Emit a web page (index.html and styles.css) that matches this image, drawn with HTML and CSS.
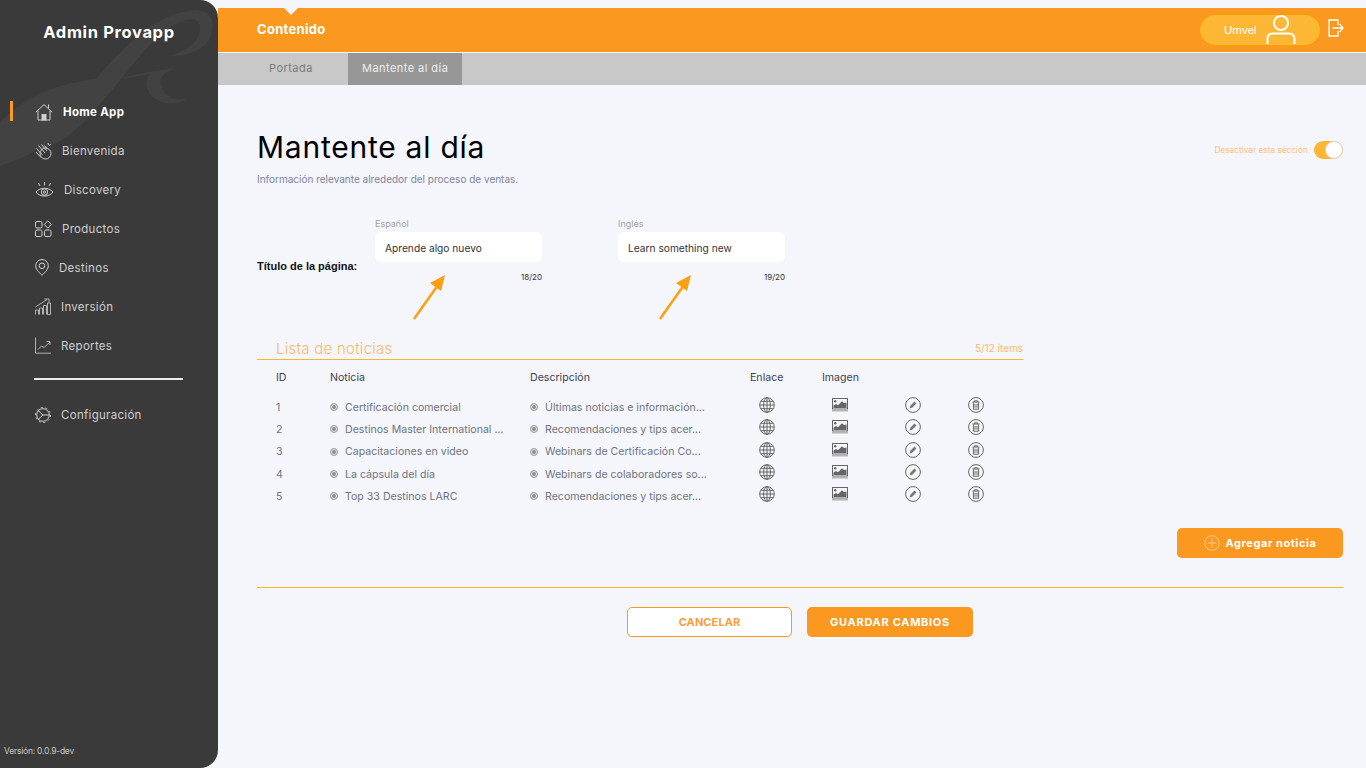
FILE: index.html
```html
<!DOCTYPE html>
<html lang="es">

<head>
    <meta charset="UTF-8">
    <meta name="viewport" content="width=device-width, initial-scale=1.0">
    <title>Admin Provapp</title>
    <link rel="stylesheet" href="styles.css">
</head>

<body>
    <!-- Shared table icons -->
    <svg class="icon-defs" width="0" height="0">
        <symbol id="i-globe" viewBox="0 0 16 16">
            <g fill="none" stroke="currentColor" stroke-width="1">
                <circle cx="8" cy="8" r="7.3"/>
                <ellipse cx="8" cy="8" rx="3.4" ry="7.3"/>
                <path d="M8 .7v14.6M.7 8h14.6M1.8 4.3h12.4M1.8 11.7h12.4"/>
            </g>
        </symbol>
        <symbol id="i-image" viewBox="0 0 16 14">
            <rect x=".5" y=".5" width="15" height="10.5" fill="none" stroke="currentColor"/>
            <circle cx="3.2" cy="3.2" r="1.2" fill="currentColor"/>
            <path d="M1.5 10V7.5l2.5-1.6 2 1.4 4-4 2 1.8 2.5-.6V10z" fill="currentColor"/>
            <rect y="11.5" width="16" height="2" fill="#b5b5b5"/>
        </symbol>
        <symbol id="i-edit" viewBox="0 0 16 16">
            <circle cx="8" cy="8" r="7.4" fill="none" stroke="currentColor"/>
            <path d="M4.6 11.4l.7-2.6 4.2-4.2 1.900 1.900-4.200 4.200z" fill="#777"/>
        </symbol>
        <symbol id="i-trash" viewBox="0 0 16 16">
            <circle cx="8" cy="8" r="7.4" fill="none" stroke="currentColor"/>
            <path d="M4.500 5h7M6.500 5V3.800h3V5M5.400 5.400v6.800h5.200V5.400M7 6.800v4M9 6.800v4" fill="none" stroke="currentColor"/>
        </symbol>
    </svg>

    <!-- Sidebar -->
    <aside class="sidebar">
        <svg class="sidebar-mark" width="218" height="170" viewBox="0 0 218 170">
            <path d="M0 122C30 92 60 82 118 76 90 108 58 148 0 166z" fill="#424242"/>
            <path d="M72 110C110 60 150 12 196 10c16 0 20 14 14 28-6 12-22 18-40 18 14-4 28-12 30-26 1-10-6-12-14-10-32 8-62 60-100 100-20 20-40 34-86 36 44-8 62-24 72-46z" fill="#424242"/>
            <path d="M118 78c20-4 40-8 58-10-14 4-18 12-14 20 4 10 16 14 26 10-10 8-28 8-38-4-6-8-4-14 0-20-10 2-20 4-32 4z" fill="#424242"/>
        </svg>
        <h1 class="brand">Admin Provapp</h1>
        <nav class="side-nav">
            <a class="side-link active">
                <svg width="18" height="18" viewBox="0 0 18 18" fill="none" stroke="#cfcfcf"><path d="M.8 9.200L9 1.600l8.200 7.600M3 7.600V17h12V7.600M13.500 5V1.500"/><rect x="7" y="11.500" width="4" height="5.500" fill="#cfcfcf"/></svg>
                <span>Home App</span>
            </a>
            <a class="side-link">
                <svg width="17" height="18" viewBox="0 0 17 18" fill="none" stroke="currentColor"><circle cx="10.500" cy="11.500" r="5.500"/><path d="M1.500 6.500l6 6.500M1 10l5 5.500M3.500 3.500l6.500 7.500M6.500 2.500l5.500 6.500M9.500 3.500l3 3.500"/><path d="M13 1l.5 2M15.500 2l-1 1.800"/></svg>
                <span>Bienvenida</span>
            </a>
            <a class="side-link">
                <svg width="19" height="18" viewBox="0 0 19 18" fill="none" stroke="currentColor"><path d="M1 11c4-5 13-5 17 0-4 5.500-13 5.500-17 0z"/><circle cx="9.500" cy="11" r="3.200"/><circle cx="9.500" cy="11" r="1.200"/><path d="M9.500 1v3.500M3.500 2l1.500 3M15.500 2L14 5"/></svg>
                <span>Discovery</span>
            </a>
            <a class="side-link">
                <svg width="17" height="17" viewBox="0 0 17 17" fill="none" stroke="currentColor"><rect x=".5" y="1.500" width="6.500" height="6.500" rx="1.500"/><rect x=".5" y="10" width="6.500" height="6.500" rx="1.500"/><rect x="9.500" y="10" width="6.500" height="6.500" rx="1.500"/><path d="M12.800.8l3.500 3.700-3.500 3.700-3.500-3.700z"/></svg>
                <span>Productos</span>
            </a>
            <a class="side-link">
                <svg width="14" height="17" viewBox="0 0 14 17" fill="none" stroke="currentColor"><path d="M7 16.300C3 12.500.7 9.800.7 6.800a6.300 6.300 0 0 1 12.600 0c0 3-2.300 5.700-6.300 9.500z"/><circle cx="7" cy="6.800" r="2.800"/></svg>
                <span>Destinos</span>
            </a>
            <a class="side-link">
                <svg width="16" height="17" viewBox="0 0 16 17" fill="none" stroke="currentColor" stroke-width=".8"><path d="M.5 16.500V12h3v4.500M4.500 16.500V10h3v6.500M8.500 16.500V7.500h3v9M12.500 16.500V5h3v11.500zM.5 9L12 1.500M9.500 1H14v3.500"/></svg>
                <span>Inversión</span>
            </a>
            <a class="side-link">
                <svg width="16" height="17" viewBox="0 0 16 17" fill="none" stroke="currentColor" stroke-width=".8"><path d="M.5.500v15.700H16"/><path d="M3 12.500l3.500-3.500 2.500 1.500L15 5M11.500 4.500H15V8"/></svg>
                <span>Reportes</span>
            </a>
        </nav>
        <hr class="side-sep">
        <a class="side-link">
            <svg width="16" height="16" viewBox="0 0 16 16" fill="none" stroke="currentColor"><circle cx="8" cy="8" r="6.300"/><circle cx="8" cy="8" r="7.500" stroke-dasharray="2 2.700"/><path d="M3 3.500L8 8l-5 4.500M8 8h6.300"/></svg>
            <span>Configuración</span>
        </a>
        <p class="version">Versión: 0.0.9-dev</p>
    </aside>

    <!-- Main content -->
    <main class="main-content">
        <header class="top-bar">
            <span class="top-notch"></span>
            <h2 class="top-title">Contenido</h2>
            <div class="user-pill">
                <span>Umvel</span>
                <svg width="30" height="30" viewBox="0 0 30 30" fill="none" stroke="#fff" stroke-width="2"><circle cx="15" cy="8" r="7"/><path d="M1.500 29v-5c0-3.500 2-5.500 5.500-5.500h16c3.500 0 5.500 2 5.500 5.500v5"/></svg>
            </div>
            <svg class="logout" width="16" height="18" viewBox="0 0 16 18" fill="none" stroke="#fff" stroke-width="1.300"><path d="M10 6V1H1v16h9v-5"/><path d="M4.500 9H15M11.500 5L15 9l-3.500 4"/></svg>
        </header>
        <div class="sub-nav">
            <a class="sub-link">Portada</a>
            <a class="sub-link current">Mantente al día</a>
        </div>

        <section class="page">
            <div class="page-head">
                <div>
                    <h1 class="page-title">Mantente al día</h1>
                    <p class="page-sub">Información relevante alrededor del proceso de ventas.</p>
                </div>
                <div class="section-toggle">
                    <span>Desactivar esta sección</span>
                    <span class="switch"></span>
                </div>
            </div>

            <div class="title-form">
                <label class="form-label">Título de la página:</label>
                <div class="field">
                    <span class="field-lang">Español</span>
                    <div class="field-input">Aprende algo nuevo</div>
                    <span class="field-count">18/20</span>
                    <svg class="arrow" width="36" height="48" viewBox="0 0 36 48"><path d="M2 46L26 12" stroke="#ff9f10" stroke-width="2.500"/><path d="M33 2l-15 8 11 8z" fill="#ff9f10"/></svg>
                </div>
                <div class="field">
                    <span class="field-lang">Inglés</span>
                    <div class="field-input">Learn something new</div>
                    <span class="field-count">19/20</span>
                    <svg class="arrow arrow-en" width="36" height="48" viewBox="0 0 36 48"><path d="M2 46L26 12" stroke="#ff9f10" stroke-width="2.500"/><path d="M33 2l-15 8 11 8z" fill="#ff9f10"/></svg>
                </div>
            </div>

            <div class="news">
                <div class="news-head">
                    <h3>Lista de noticias</h3>
                    <span>5/12 ítems</span>
                </div>
                <div class="news-row news-labels">
                    <span>ID</span><span>Noticia</span><span>Descripción</span><span>Enlace</span><span>Imagen</span>
                </div>
                <div class="news-row">
                    <span>1</span>
                    <span class="cell-dot">Certificación comercial</span>
                    <span class="cell-dot">Últimas noticias e información...</span>
                    <svg class="ic-globe"><use href="#i-globe"/></svg>
                    <svg class="ic-image"><use href="#i-image"/></svg>
                    <svg class="ic-edit"><use href="#i-edit"/></svg>
                    <svg class="ic-edit"><use href="#i-trash"/></svg>
                </div>
                <div class="news-row">
                    <span>2</span>
                    <span class="cell-dot">Destinos Master International ...</span>
                    <span class="cell-dot">Recomendaciones y tips acer...</span>
                    <svg class="ic-globe"><use href="#i-globe"/></svg>
                    <svg class="ic-image"><use href="#i-image"/></svg>
                    <svg class="ic-edit"><use href="#i-edit"/></svg>
                    <svg class="ic-edit"><use href="#i-trash"/></svg>
                </div>
                <div class="news-row">
                    <span>3</span>
                    <span class="cell-dot">Capacitaciones en video</span>
                    <span class="cell-dot">Webinars de Certificación Co...</span>
                    <svg class="ic-globe"><use href="#i-globe"/></svg>
                    <svg class="ic-image"><use href="#i-image"/></svg>
                    <svg class="ic-edit"><use href="#i-edit"/></svg>
                    <svg class="ic-edit"><use href="#i-trash"/></svg>
                </div>
                <div class="news-row">
                    <span>4</span>
                    <span class="cell-dot">La cápsula del día</span>
                    <span class="cell-dot">Webinars de colaboradores so...</span>
                    <svg class="ic-globe"><use href="#i-globe"/></svg>
                    <svg class="ic-image"><use href="#i-image"/></svg>
                    <svg class="ic-edit"><use href="#i-edit"/></svg>
                    <svg class="ic-edit"><use href="#i-trash"/></svg>
                </div>
                <div class="news-row">
                    <span>5</span>
                    <span class="cell-dot">Top 33 Destinos LARC</span>
                    <span class="cell-dot">Recomendaciones y tips acer...</span>
                    <svg class="ic-globe"><use href="#i-globe"/></svg>
                    <svg class="ic-image"><use href="#i-image"/></svg>
                    <svg class="ic-edit"><use href="#i-edit"/></svg>
                    <svg class="ic-edit"><use href="#i-trash"/></svg>
                </div>
            </div>

            <div class="add-row">
                <button class="btn btn-add">
                    <svg width="16" height="16" viewBox="0 0 16 16" fill="none" stroke="#ffc98a"><circle cx="8" cy="8" r="7.300"/><path d="M8 3.500v9M3.500 8h9"/></svg>
                    Agregar noticia
                </button>
            </div>

            <div class="page-actions">
                <button class="btn btn-outline">CANCELAR</button>
                <button class="btn btn-save">GUARDAR CAMBIOS</button>
            </div>
        </section>
    </main>
</body>

</html>
```

FILE: styles.css
```css
/* Basic Reset */
* {
    margin: 0;
    padding: 0;
    box-sizing: border-box;
}

body {
    font-family: "Inter", "Liberation Sans", sans-serif;
    display: flex;
    height: 768px;
    overflow: hidden;
    background-color: #f4f6fb;
}

.icon-defs {
    position: absolute;
}

/* Sidebar */
.sidebar {
    position: relative;
    overflow: hidden;
    width: 218px;
    height: 768px;
    flex-shrink: 0;
    background-color: #3a3a3a;
    border-radius: 0 18px 18px 0;
    color: #cfcfcf;
    display: flex;
    flex-direction: column;
}

.sidebar-mark {
    position: absolute;
    top: 0;
    left: 0;
}

.brand {
    position: relative;
    margin-top: 22px;
    height: 20px;
    font-size: 16.5px;
    line-height: 20px;
    font-weight: 700;
    letter-spacing: .65px;
    color: #fff;
    text-align: center;
}

.side-nav {
    position: relative;
    margin-top: 50px;
    display: flex;
    flex-direction: column;
}

.side-link {
    position: relative;
    height: 39px;
    padding-left: 35px;
    display: flex;
    align-items: center;
    gap: 10px;
    font-size: 11.5px;
    letter-spacing: .3px;
    color: #cfcfcf;
    cursor: pointer;
}

.side-link.active {
    color: #fff;
    font-weight: 700;
}

.side-link.active::before {
    content: "";
    position: absolute;
    left: 10px;
    top: 9px;
    width: 3px;
    height: 20px;
    background-color: #fb9820;
}

.side-sep {
    margin: 13px 0 15px 34px;
    width: 149px;
    border: 0;
    border-top: 2px solid #ececec;
}

.version {
    position: absolute;
    left: 4px;
    bottom: 12px;
    font-size: 8.5px;
    letter-spacing: -.22px;
    color: #c8c8c8;
}

/* Main content */
.main-content {
    flex: 1;
    padding-top: 8px;
    min-width: 0;
}

.top-bar {
    position: relative;
    height: 44px;
    background-color: #fb9820;
    display: flex;
    align-items: center;
    padding: 0 22px 0 39px;
}

.top-notch {
    position: absolute;
    left: 66px;
    top: 0;
    border-left: 7px solid transparent;
    border-right: 7px solid transparent;
    border-top: 7px solid #f4f6fb;
}

.top-title {
    font-size: 13px;
    font-weight: 700;
    letter-spacing: .3px;
    color: #fff;
    margin-top: -3px;
}

.user-pill {
    margin-left: auto;
    width: 120px;
    height: 30px;
    background-color: #fdb735;
    border: 1px solid #fcc010;
    border-radius: 15px;
    display: flex;
    align-items: center;
    justify-content: space-between;
    padding: 0 23px 0 23px;
    font-family: "Liberation Sans", sans-serif;
    font-size: 11.5px;
    color: #fff;
}

.logout {
    margin-left: 8px;
    margin-top: -5px;
}

.sub-nav {
    margin-top: 1px;
    height: 32px;
    background-color: #c8c8c8;
    display: flex;
    padding-left: 39px;
}

.sub-link {
    width: 91px;
    padding-left: 12px;
    line-height: 31px;
    font-size: 11px;
    color: #7c7c7c;
    letter-spacing: .45px;
}

.sub-link.current {
    width: 114px;
    padding-left: 14px;
    background-color: #979797;
    color: #eee;
}

.page {
    padding: 44px 23px 0 39px;
}

.page-head {
    display: flex;
    justify-content: space-between;
    align-items: flex-start;
}

.page-title {
    font-size: 30px;
    line-height: 36px;
    font-weight: 400;
    letter-spacing: .75px;
    color: #000;
}

.page-sub {
    margin-top: 8px;
    font-size: 10px;
    color: #80849a;
}

.section-toggle {
    display: flex;
    align-items: center;
    gap: 6px;
    margin-top: 12px;
    font-size: 8.3px;
    color: #ffc080;
}

.switch {
    position: relative;
    width: 29px;
    height: 18px;
    border-radius: 9px;
    background-color: #fdb735;
}

.switch::after {
    content: "";
    position: absolute;
    right: 0;
    top: 0;
    width: 16px;
    height: 16px;
    border-radius: 50%;
    background-color: #fff;
    border: 1px solid #d8d4cc;
}

/* Title form */
.title-form {
    display: flex;
    align-items: flex-start;
    margin-top: 32px;
}

.form-label {
    width: 118px;
    margin-top: 43px;
    font-family: "Liberation Sans", sans-serif;
    font-size: 11px;
    font-weight: 700;
    color: #111;
}

.field {
    position: relative;
    width: 167px;
    margin-right: 76px;
    display: flex;
    flex-direction: column;
}

.field-lang {
    font-size: 9px;
    line-height: 14px;
    color: #a2a2a8;
}

.field-input {
    height: 30px;
    margin-top: 1px;
    padding-left: 10px;
    line-height: 32px;
    font-size: 10.2px;
    color: #333;
    background-color: #fff;
    border-radius: 6px;
}

.field-count {
    margin-top: 10px;
    font-size: 8px;
    color: #333;
    text-align: right;
}

.arrow {
    position: absolute;
    left: 37px;
    top: 56px;
}

.arrow-en {
    left: 40px;
}

/* News list */
.news {
    width: 766px;
    margin-top: 59px;
}

.news-head {
    height: 19px;
    padding: 0 0 0 19px;
    display: flex;
    justify-content: space-between;
    align-items: flex-end;
    border-bottom: 1px solid #fdb52e;
    color: #ffb866;
}

.news-head h3 {
    font-size: 15px;
    line-height: 18px;
    font-weight: 300;
    letter-spacing: .25px;
    margin-bottom: 1px;
}

.news-head span {
    font-size: 10px;
    line-height: 18px;
    margin-bottom: 2px;
}

.news-row {
    height: 22.3px;
    padding-left: 19px;
    display: grid;
    grid-template-columns: 54px 200px 220px 72px 83px 63px 16px;
    align-items: center;
    font-size: 10.6px;
    color: #6f7480;
}

.news-labels {
    height: 34px;
    color: #3c4250;
    margin-bottom: 2px;
}

.cell-dot {
    display: flex;
    align-items: center;
    gap: 7px;
}

.cell-dot::before {
    content: "";
    box-sizing: border-box;
    width: 8px;
    height: 8px;
    border-radius: 50%;
    background-color: #8f8f8f;
    border: 1px solid #a8a8a8;
    box-shadow: inset 0 0 0 1px #e4e4e4;
}

.ic-globe,
.ic-edit {
    width: 16px;
    height: 16px;
    margin-bottom: 4px;
    color: #666;
}

.ic-globe {
    margin-left: 9px;
}

.ic-image {
    width: 16px;
    height: 14px;
    margin-left: 10px;
    margin-bottom: 4px;
    color: #666;
}

/* Buttons */
.add-row {
    display: flex;
    justify-content: flex-end;
    margin-top: 21px;
    padding-bottom: 29px;
    border-bottom: 1px solid #fdb52e;
}

.btn {
    height: 30px;
    border-radius: 5px;
    font-family: "Inter", sans-serif;
    font-size: 11px;
    font-weight: 700;
    cursor: pointer;
}

.btn-add {
    width: 166px;
    display: flex;
    align-items: center;
    justify-content: center;
    gap: 6px;
    border: 0;
    letter-spacing: .55px;
    background-color: #fb9820;
    color: #fff;
}

.page-actions {
    display: flex;
    justify-content: center;
    gap: 15px;
    margin-top: 19px;
}

.btn-outline {
    width: 165px;
    border: 1px solid #fb9820;
    background-color: #fff;
    letter-spacing: .1px;
    color: #fb9d3a;
}

.btn-save {
    width: 166px;
    border: 0;
    letter-spacing: .7px;
    background-color: #fb9820;
    color: #fff;
}
```
